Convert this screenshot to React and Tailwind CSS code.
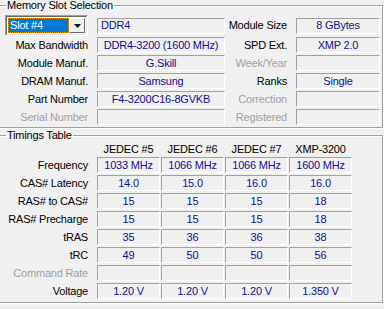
import React from 'react';

const slotRows = [
  { label: 'Max Bandwidth', value: 'DDR4-3200 (1600 MHz)', rLabel: 'SPD Ext.', rValue: 'XMP 2.0' },
  { label: 'Module Manuf.', value: 'G.Skill', rLabel: 'Week/Year', rValue: '', rDim: true },
  { label: 'DRAM Manuf.', value: 'Samsung', rLabel: 'Ranks', rValue: 'Single' },
  { label: 'Part Number', value: 'F4-3200C16-8GVKB', rLabel: 'Correction', rValue: '', rDim: true },
  { label: 'Serial Number', value: '', dim: true, rLabel: 'Registered', rValue: '', rDim: true },
];

const columns = ['JEDEC #5', 'JEDEC #6', 'JEDEC #7', 'XMP-3200'];

const timings = [
  { label: 'Frequency', values: ['1033 MHz', '1066 MHz', '1066 MHz', '1600 MHz'] },
  { label: 'CAS# Latency', values: ['14.0', '15.0', '16.0', '16.0'] },
  { label: 'RAS# to CAS#', values: ['15', '15', '15', '18'] },
  { label: 'RAS# Precharge', values: ['15', '15', '15', '18'] },
  { label: 'tRAS', values: ['35', '36', '36', '38'] },
  { label: 'tRC', values: ['49', '50', '50', '56'] },
  { label: 'Command Rate', values: ['', '', '', ''], dim: true },
  { label: 'Voltage', values: ['1.20 V', '1.20 V', '1.20 V', '1.350 V'] },
];

function Field({ children, left, className = '' }) {
  return (
    <div
      className={`h-[16px] shrink-0 border border-t-[#a0a0a0] border-l-[#a0a0a0] border-b-white border-r-white flex items-center text-[#10108a] whitespace-nowrap ${
        left ? 'justify-start pl-[3px]' : 'justify-center'
      } ${className}`}
    >
      {children}
    </div>
  );
}

function Label({ children, dim, className = '' }) {
  return (
    <div className={`shrink-0 text-right whitespace-nowrap ${dim ? 'text-[#a0a0a0]' : 'text-black'} ${className}`}>
      {children}
    </div>
  );
}

function SlotCombo() {
  return (
    <div className="ml-[5px] w-[83px] h-[21px] border border-t-[#a0a0a0] border-l-[#a0a0a0] border-b-white border-r-white">
      <div className="h-full flex border border-t-[#696969] border-l-[#696969] border-b-[#e3e3e3] border-r-[#e3e3e3] bg-white p-[1px]">
        <div className="flex-1 flex items-center bg-[#0078d7] border border-dotted border-[#ff9a00] pl-[1px] text-white">
          Slot #4
        </div>
        <div className="w-[16px] flex items-center justify-center bg-[#f0f0f0] border border-t-white border-l-white border-b-[#696969] border-r-[#696969]">
          <svg width="7" height="4" viewBox="0 0 7 4">
            <path d="M0 0h7L3.5 4z" fill="#000" />
          </svg>
        </div>
      </div>
    </div>
  );
}

export default function App() {
  return (
    <div className="w-[384px] h-[309px] overflow-hidden bg-[#f0f0f0] font-['Liberation_Sans',Arial,sans-serif] text-[11px] tracking-[-0.2px] leading-[13px] text-black">
      {/* Memory Slot Selection */}
      <fieldset className="-ml-[2px] w-[385px] h-[128px] border border-[#a0a0a0] shadow-[inset_1px_1px_0_#fff,1px_1px_0_#fff]">
        <legend className="ml-[7px] px-[1px] leading-[10px] bg-[#f0f0f0]">Memory Slot Selection</legend>
        <div className="pl-[1px] pt-[5px] flex flex-col">
          <div className="h-[21px] flex items-center">
            <SlotCombo />
            <Field left className="ml-[9px] w-[128px]">DDR4</Field>
            <Label className="w-[62px]">Module Size</Label>
            <Field className="ml-[9px] w-[84px]">8 GBytes</Field>
          </div>
          {slotRows.map((row, i) => (
            <div key={row.label} className={`flex items-center ${i === 0 ? 'mt-[1px]' : 'mt-[2px]'}`}>
              <Label dim={row.dim} className="w-[88px]">{row.label}</Label>
              <Field className="ml-[9px] w-[128px]">{row.value}</Field>
              <Label dim={row.rDim} className="w-[62px]">{row.rLabel}</Label>
              <Field className="ml-[9px] w-[84px]">{row.rValue}</Field>
            </div>
          ))}
        </div>
      </fieldset>

      {/* Timings Table */}
      <fieldset className="mt-[2px] -ml-[2px] w-[385px] h-[173px] border border-[#a0a0a0] shadow-[inset_1px_1px_0_#fff,1px_1px_0_#fff]">
        <legend className="ml-[7px] px-[1px] leading-[10px] bg-[#f0f0f0]">Timings Table</legend>
        <div className="pl-[1px] pt-[2px] flex flex-col">
          <div className="h-[14px] flex items-center">
            <div className="w-[88px] shrink-0" />
            <div className="ml-[9px] flex gap-[1px]">
              {columns.map((c) => (
                <div key={c} className="w-[63px] text-center whitespace-nowrap">{c}</div>
              ))}
            </div>
          </div>
          {timings.map((row, i) => (
            <div key={row.label} className={`flex items-center ${i === 0 ? 'mt-[1px]' : 'mt-[2px]'}`}>
              <Label dim={row.dim} className="w-[88px]">{row.label}</Label>
              <div className="ml-[9px] flex gap-[1px]">
                {row.values.map((v, j) => (
                  <Field key={j} className="w-[63px]">{v}</Field>
                ))}
              </div>
            </div>
          ))}
        </div>
      </fieldset>

      <div className="mt-[4px] border-t border-[#e6e6e6]" />
    </div>
  );
}
